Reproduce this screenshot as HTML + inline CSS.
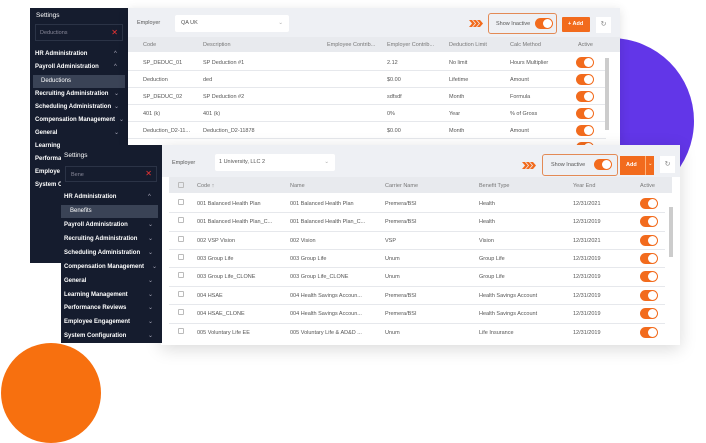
<!DOCTYPE html><html><head><meta charset="utf-8"><style>
*{box-sizing:border-box;margin:0;padding:0}
body{width:706px;height:443px;overflow:hidden;background:#fff;font-family:"Liberation Sans",sans-serif;position:relative}
.a{position:absolute}
.sb{background:#151c2e;color:#fff}
.sb .i{position:absolute;font-size:6px;font-weight:bold;white-space:nowrap}
.sb .c{position:absolute;font-size:6px;color:#aab}
.t{font-size:5.5px;color:#555;position:absolute;white-space:nowrap}
.h{font-size:5.5px;color:#777;position:absolute;white-space:nowrap}
.tg{position:absolute;width:18px;height:11px;border-radius:6px;background:#f26b1d}
.tg:after{content:"";position:absolute;right:1px;top:1px;width:9px;height:9px;border-radius:50%;background:#fff}
.ln{position:absolute;height:1px;background:#e6e8ec}
.cb{position:absolute;width:6px;height:6px;border:1px solid #bbb;border-radius:1px}
</style></head><body>
<div class="a" style="left:528px;top:38px;width:166px;height:166px;border-radius:50%;background:#6236e8"></div>
<div class="a" style="left:1px;top:343px;width:100px;height:100px;border-radius:50%;background:#f7700f"></div>

<!-- back window -->
<div class="a sb" style="left:30px;top:8px;width:98px;height:255px">
<div class="i" style="left:6px;top:4px;font-weight:normal;font-size:6.5px">Settings</div>
<div class="a" style="left:5px;top:16px;width:88px;height:17px;border:1px solid #2b3346;font-size:5.5px;color:#889;padding:5px 4px">Deductions<span style="position:absolute;right:4px;top:3px;color:#e33;font-size:8px">✕</span></div>
<div class="i" style="left:5px;top:43px">HR Administration</div><div class="c" style="left:84px;top:43px">^</div>
<div class="i" style="left:5px;top:56px">Payroll Administration</div><div class="c" style="left:84px;top:56px">^</div>
<div class="a" style="left:3px;top:67px;width:92px;height:13px;background:#3a4356"></div>
<div class="i" style="left:11px;top:70px;font-weight:normal">Deductions</div>
<div class="i" style="left:5px;top:83px">Recruiting Administration</div><div class="c" style="left:84px;top:82px">⌄</div>
<div class="i" style="left:5px;top:96px">Scheduling Administration</div><div class="c" style="left:84px;top:95px">⌄</div>
<div class="i" style="left:5px;top:109px">Compensation Management</div><div class="c" style="left:89px;top:108px">⌄</div>
<div class="i" style="left:5px;top:122px">General</div><div class="c" style="left:84px;top:121px">⌄</div>
<div class="i" style="left:5px;top:135px">Learning</div>
<div class="i" style="left:5px;top:148px">Performa</div>
<div class="i" style="left:5px;top:161px">Employe</div>
<div class="i" style="left:5px;top:174px">System C</div>
</div>
<div class="a" style="left:128px;top:8px;width:492px;height:137px;background:#fff;box-shadow:0 2px 10px rgba(0,0,0,.12)">
<div class="a" style="left:0;top:0;width:492px;height:29px;background:#eef0f4"></div>
<div class="h" style="left:9px;top:12px;color:#555">Employer</div>
<div class="a" style="left:47px;top:7px;width:114px;height:17px;background:#fff;border-radius:2px;font-size:5.5px;color:#555;padding:5px 6px">QA UK<span style="position:absolute;right:6px;color:#aaa">⌄</span></div>
<svg class="a" style="left:341px;top:12px" width="16" height="7" viewBox="0 0 16 7"><path d="M0 0h3l3 3.5-3 3.5H0l3-3.5zM4 0h3l3 3.5-3 3.5H4l3-3.5zM8 0h3l3 3.5-3 3.5H8l3-3.5z" fill="#f26b1d"/></svg>
<div class="a" style="left:360px;top:5px;width:69px;height:21px;border:1.5px solid #e38a55;border-radius:3px"></div>
<div class="h" style="left:368px;top:13px;color:#555">Show Inactive</div>
<div class="tg" style="left:407px;top:10px"></div>
<div class="a" style="left:434px;top:9px;width:28px;height:15px;background:#f26b1d;color:#fff;font-size:5.5px;font-weight:bold;padding:4px 6px;border-radius:1px">+ Add</div>
<div class="a" style="left:468px;top:9px;width:15px;height:16px;background:#fff;font-size:7px;color:#888;text-align:center;line-height:16px">↻</div>
<div class="a" style="left:0;top:29px;width:492px;height:15px;background:#e8eaee"></div>
<div class="h" style="left:15px;top:34px">Code</div><div class="h" style="left:75px;top:34px">Description</div><div class="h" style="left:199px;top:34px">Employee Contrib...</div><div class="h" style="left:259px;top:34px">Employer Contrib...</div><div class="h" style="left:321px;top:34px">Deduction Limit</div><div class="h" style="left:382px;top:34px">Calc Method</div><div class="h" style="left:450px;top:34px">Active</div>
<div class="t" style="left:15px;top:52px">SP_DEDUC_01</div><div class="t" style="left:75px;top:52px">SP Deduction #1</div><div class="t" style="left:259px;top:52px">2.12</div><div class="t" style="left:321px;top:52px">No limit</div><div class="t" style="left:382px;top:52px">Hours Multiplier</div><div class="tg" style="left:448px;top:49px"></div><div class="ln" style="left:0;top:62px;width:478px"></div>
<div class="t" style="left:15px;top:69px">Deduction</div><div class="t" style="left:75px;top:69px">ded</div><div class="t" style="left:259px;top:69px">$0.00</div><div class="t" style="left:321px;top:69px">Lifetime</div><div class="t" style="left:382px;top:69px">Amount</div><div class="tg" style="left:448px;top:66px"></div><div class="ln" style="left:0;top:79px;width:478px"></div>
<div class="t" style="left:15px;top:86px">SP_DEDUC_02</div><div class="t" style="left:75px;top:86px">SP Deduction #2</div><div class="t" style="left:259px;top:86px">sdfsdf</div><div class="t" style="left:321px;top:86px">Month</div><div class="t" style="left:382px;top:86px">Formula</div><div class="tg" style="left:448px;top:83px"></div><div class="ln" style="left:0;top:96px;width:478px"></div>
<div class="t" style="left:15px;top:103px">401 (k)</div><div class="t" style="left:75px;top:103px">401 (k)</div><div class="t" style="left:259px;top:103px">0%</div><div class="t" style="left:321px;top:103px">Year</div><div class="t" style="left:382px;top:103px">% of Gross</div><div class="tg" style="left:448px;top:100px"></div><div class="ln" style="left:0;top:113px;width:478px"></div>
<div class="t" style="left:15px;top:120px">Deduction_D2-11...</div><div class="t" style="left:75px;top:120px">Deduction_D2-11878</div><div class="t" style="left:259px;top:120px">$0.00</div><div class="t" style="left:321px;top:120px">Month</div><div class="t" style="left:382px;top:120px">Amount</div><div class="tg" style="left:448px;top:117px"></div><div class="ln" style="left:0;top:130px;width:478px"></div>
<div class="tg" style="left:448px;top:134px"></div>
<div class="a" style="left:477px;top:50px;width:4px;height:72px;background:#ccc"></div>
</div>

<!-- front window -->
<div class="a" style="left:161px;top:145px;width:519px;height:200px;background:#fff;box-shadow:0 4px 16px rgba(0,0,0,.15)">
<div class="a" style="left:0;top:0;width:519px;height:32px;background:#eef0f4"></div>
<div class="h" style="left:11px;top:15px;color:#555">Employer</div>
<div class="a" style="left:54px;top:9px;width:120px;height:17px;background:#fff;border-radius:2px;font-size:5.5px;color:#555;padding:5px 4px">1 University, LLC 2<span style="position:absolute;right:6px;color:#aaa">⌄</span></div>
<svg class="a" style="left:361px;top:17px" width="16" height="7" viewBox="0 0 16 7"><path d="M0 0h3l3 3.5-3 3.5H0l3-3.5zM4 0h3l3 3.5-3 3.5H4l3-3.5zM8 0h3l3 3.5-3 3.5H8l3-3.5z" fill="#f26b1d"/></svg>
<div class="a" style="left:381px;top:9px;width:76px;height:22px;border:1.5px solid #e38a55;border-radius:3px"></div>
<div class="h" style="left:390px;top:17px;color:#555">Show Inactive</div>
<div class="tg" style="left:433px;top:14px"></div>
<div class="a" style="left:459px;top:11px;width:34px;height:19px;background:#f26b1d;color:#fff;font-size:5.5px;font-weight:bold;padding:6px 6px">Add<span style="position:absolute;left:25px;top:0;width:1px;height:19px;background:#ffb37a"></span><span style="position:absolute;left:28px;top:5px;font-weight:normal;color:#ffd">⌄</span></div>
<div class="a" style="left:499px;top:11px;width:15px;height:17px;background:#fff;font-size:7px;color:#888;text-align:center;line-height:17px">↻</div>
<div class="a" style="left:8px;top:32px;width:503px;height:16px;background:#e8eaee"></div>
<div class="cb" style="left:17px;top:37px"></div>
<div class="h" style="left:36px;top:38px">Code ↑</div><div class="h" style="left:129px;top:38px">Name</div><div class="h" style="left:224px;top:38px">Carrier Name</div><div class="h" style="left:318px;top:38px">Benefit Type</div><div class="h" style="left:412px;top:38px">Year End</div><div class="h" style="left:479px;top:38px">Active</div>
<div class="cb" style="left:17px;top:54px"></div><div class="t" style="left:36px;top:56px">001 Balanced Health Plan</div><div class="t" style="left:129px;top:56px">001 Balanced Health Plan</div><div class="t" style="left:224px;top:56px">Premera/BSI</div><div class="t" style="left:318px;top:56px">Health</div><div class="t" style="left:412px;top:56px">12/31/2021</div><div class="tg" style="left:479px;top:53px"></div><div class="ln" style="left:8px;top:67px;width:496px"></div>
<div class="cb" style="left:17px;top:72px"></div><div class="t" style="left:36px;top:74px">001 Balanced Health Plan_C...</div><div class="t" style="left:129px;top:74px">001 Balanced Health Plan_C...</div><div class="t" style="left:224px;top:74px">Premera/BSI</div><div class="t" style="left:318px;top:74px">Health</div><div class="t" style="left:412px;top:74px">12/31/2019</div><div class="tg" style="left:479px;top:71px"></div><div class="ln" style="left:8px;top:86px;width:496px"></div>
<div class="cb" style="left:17px;top:91px"></div><div class="t" style="left:36px;top:93px">002 VSP Vision</div><div class="t" style="left:129px;top:93px">002 Vision</div><div class="t" style="left:224px;top:93px">VSP</div><div class="t" style="left:318px;top:93px">Vision</div><div class="t" style="left:412px;top:93px">12/31/2021</div><div class="tg" style="left:479px;top:90px"></div><div class="ln" style="left:8px;top:104px;width:496px"></div>
<div class="cb" style="left:17px;top:109px"></div><div class="t" style="left:36px;top:111px">003 Group Life</div><div class="t" style="left:129px;top:111px">003 Group Life</div><div class="t" style="left:224px;top:111px">Unum</div><div class="t" style="left:318px;top:111px">Group Life</div><div class="t" style="left:412px;top:111px">12/31/2019</div><div class="tg" style="left:479px;top:108px"></div><div class="ln" style="left:8px;top:122px;width:496px"></div>
<div class="cb" style="left:17px;top:127px"></div><div class="t" style="left:36px;top:129px">003 Group Life_CLONE</div><div class="t" style="left:129px;top:129px">003 Group Life_CLONE</div><div class="t" style="left:224px;top:129px">Unum</div><div class="t" style="left:318px;top:129px">Group Life</div><div class="t" style="left:412px;top:129px">12/31/2019</div><div class="tg" style="left:479px;top:126px"></div><div class="ln" style="left:8px;top:141px;width:496px"></div>
<div class="cb" style="left:17px;top:146px"></div><div class="t" style="left:36px;top:148px">004 HSAE</div><div class="t" style="left:129px;top:148px">004 Health Savings Accoun...</div><div class="t" style="left:224px;top:148px">Premera/BSI</div><div class="t" style="left:318px;top:148px">Health Savings Account</div><div class="t" style="left:412px;top:148px">12/31/2019</div><div class="tg" style="left:479px;top:145px"></div><div class="ln" style="left:8px;top:159px;width:496px"></div>
<div class="cb" style="left:17px;top:164px"></div><div class="t" style="left:36px;top:166px">004 HSAE_CLONE</div><div class="t" style="left:129px;top:166px">004 Health Savings Accoun...</div><div class="t" style="left:224px;top:166px">Premera/BSI</div><div class="t" style="left:318px;top:166px">Health Savings Account</div><div class="t" style="left:412px;top:166px">12/31/2019</div><div class="tg" style="left:479px;top:163px"></div><div class="ln" style="left:8px;top:178px;width:496px"></div>
<div class="cb" style="left:17px;top:183px"></div><div class="t" style="left:36px;top:185px">005 Voluntary Life EE</div><div class="t" style="left:129px;top:185px">005 Voluntary Life &amp; AD&amp;D ...</div><div class="t" style="left:224px;top:185px">Unum</div><div class="t" style="left:318px;top:185px">Life Insurance</div><div class="t" style="left:412px;top:185px">12/31/2019</div><div class="tg" style="left:479px;top:182px"></div>
<div class="a" style="left:508px;top:62px;width:4px;height:50px;background:#ccc"></div>
</div>
<div class="a sb" style="left:61px;top:145px;width:101px;height:198px">
<div class="i" style="left:3px;top:7px;font-weight:normal;font-size:6.5px">Settings</div>
<div class="a" style="left:4px;top:21px;width:92px;height:16px;border:1px solid #2b3346;font-size:5.5px;color:#889;padding:5px 5px">Bene<span style="position:absolute;right:4px;top:2px;color:#e33;font-size:8px">✕</span></div>
<div class="i" style="left:3px;top:49px">HR Administration</div><div class="c" style="left:87px;top:49px">^</div>
<div class="a" style="left:0;top:60px;width:97px;height:13px;background:#3a4356"></div>
<div class="i" style="left:9px;top:63px;font-weight:normal">Benefits</div>
<div class="i" style="left:3px;top:77px">Payroll Administration</div><div class="c" style="left:87px;top:76px">⌄</div>
<div class="i" style="left:3px;top:91px">Recruiting Administration</div><div class="c" style="left:87px;top:90px">⌄</div>
<div class="i" style="left:3px;top:105px">Scheduling Administration</div><div class="c" style="left:87px;top:104px">⌄</div>
<div class="i" style="left:3px;top:119px">Compensation Management</div><div class="c" style="left:91px;top:118px">⌄</div>
<div class="i" style="left:3px;top:133px">General</div><div class="c" style="left:87px;top:132px">⌄</div>
<div class="i" style="left:3px;top:147px">Learning Management</div><div class="c" style="left:87px;top:146px">⌄</div>
<div class="i" style="left:3px;top:160px">Performance Reviews</div><div class="c" style="left:87px;top:159px">⌄</div>
<div class="i" style="left:3px;top:174px">Employee Engagement</div><div class="c" style="left:87px;top:173px">⌄</div>
<div class="i" style="left:3px;top:188px">System Configuration</div><div class="c" style="left:87px;top:187px">⌄</div>
</div>
</body></html>
